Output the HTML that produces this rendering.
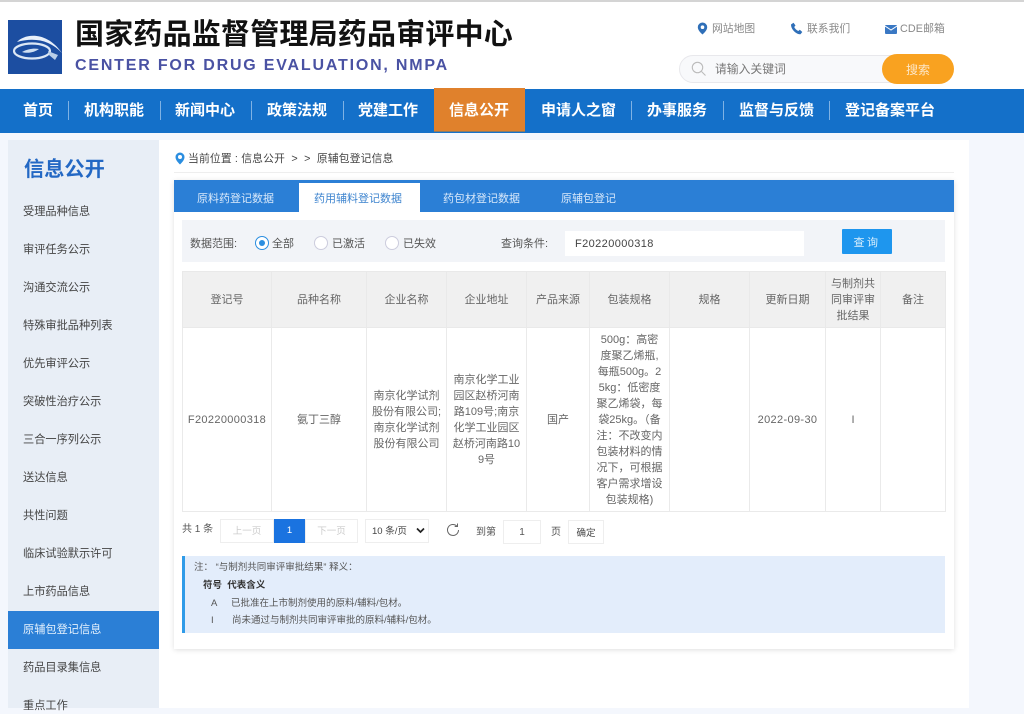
<!DOCTYPE html>
<html lang="zh"><head><meta charset="utf-8"><title>原辅包登记信息</title>
<style>
*{box-sizing:border-box}
html,body{margin:0;padding:0}
body{width:1024px;height:708px;overflow:hidden;position:relative;background:#f4f7fd;font-family:"Liberation Sans","Noto Sans CJK SC",sans-serif;color:#555}
.a,.t{position:absolute}
.t{white-space:nowrap;line-height:16px;font-size:11px}
.n{position:absolute;top:101px;line-height:20px;font-size:15px;font-weight:700;color:#fff;white-space:nowrap}
.s{position:absolute;top:101px;width:1px;height:19px;background:#7fb2e4}
.m{position:absolute;left:23px;font-size:11.2px;line-height:16px;color:#444;white-space:nowrap}
.tb{position:absolute;top:190px;font-size:11px;line-height:18px;color:#d8e8fa;white-space:nowrap}
.r{position:absolute;top:236px;width:14px;height:14px;border-radius:50%;border:1px solid #ccd;background:#fff}
table{position:absolute;left:182px;top:271px;width:763px;border-collapse:collapse;table-layout:fixed;font-size:11px;color:#666}
th,td{border:1px solid #eaeaea;text-align:center;font-weight:400;padding:0;line-height:16px}
th{background:#f0f0f0;height:56px;border-color:#e9e9e9}
td{height:184px;background:#fff}
.b{position:absolute;top:519px;height:24px;border:1px solid #eee;background:#fff;font-size:9.5px;line-height:23px;text-align:center;color:#ccc}
.x{position:absolute;font-size:9.5px;line-height:14px;color:#555;white-space:nowrap}
.num{letter-spacing:.35px}
</style></head><body>
<div class="a" style="left:0;top:0;width:1024px;height:89px;background:#fff;border-top:2px solid #d4d4d4"></div>
<svg class="a" style="left:8px;top:20px" width="54" height="54" viewBox="0 0 54 54"><rect width="54" height="54" fill="#1c4ea1"/><path d="M9 22C16 14 38 10 54 33C42 20 26 17 9 22Z" fill="#e8f0fa"/><ellipse cx="24" cy="31" rx="18" ry="7.5" fill="none" stroke="#dce8f5" stroke-width="2.2"/><path d="M40 31L50 35L47 40L41 35Z" fill="#b9cfe8"/><path d="M14 32C19 29 26 28 31 29C27 32 20 34 14 32Z" fill="#cfe0f2"/></svg>
<div class="t" style="left:75px;top:16px;font-size:29px;line-height:38px;font-weight:700;color:#111;letter-spacing:.2px">国家药品监督管理局药品审评中心</div>
<div class="t" style="left:75px;top:55px;font-size:16px;line-height:21px;font-weight:700;color:#4a52a3;letter-spacing:1.8px">CENTER FOR DRUG EVALUATION, NMPA</div>

<svg class="a" style="left:697px;top:22px" width="11" height="13" viewBox="0 0 11 13"><path d="M5.5 0.5A4.7 4.7 0 0 0 .8 5.2C.8 8 3.5 10.5 5.5 12.5C7.5 10.5 10.2 8 10.2 5.2A4.7 4.7 0 0 0 5.5 .5Z" fill="#2f6fb8"/><circle cx="5.5" cy="5.2" r="1.8" fill="#fff"/></svg>
<div class="t" style="left:712px;top:21px;font-size:10.8px;color:#888">网站地图</div>
<svg class="a" style="left:790px;top:22px" width="13" height="13" viewBox="0 0 13 13"><path d="M1 2.5L3.5 .8L5.5 3.5L4.2 5C5 6.8 6.5 8.2 8.3 9L9.8 7.7L12.3 10L10.5 12.3C6 12.3 1 7.5 1 2.5Z" fill="#2f6fb8"/></svg>
<div class="t" style="left:807px;top:21px;font-size:10.8px;color:#888">联系我们</div>
<svg class="a" style="left:885px;top:25px" width="12" height="9" viewBox="0 0 12 9"><rect width="12" height="9" rx="1" fill="#3a78c4"/><path d="M0 1L6 5L12 1" fill="none" stroke="#fff" stroke-width="1"/></svg>
<div class="t" style="left:900px;top:21px;font-size:10.8px;color:#888;letter-spacing:.1px">CDE邮箱</div>

<div class="a" style="left:679px;top:55px;width:260px;height:28px;border:1px solid #e8e8ec;border-radius:14px;background:#f8f9fb"></div>
<svg class="a" style="left:691px;top:61px" width="16" height="16" viewBox="0 0 16 16"><circle cx="6.5" cy="6.5" r="5.2" fill="none" stroke="#bbb" stroke-width="1.1"/><path d="M10.5 10.5L14.5 14.5" stroke="#bbb" stroke-width="1.1"/></svg>
<div class="t" style="left:715px;top:61px;font-size:11.8px;color:#777">请输入关键词</div>
<div class="a" style="left:882px;top:54px;width:72px;height:30px;border-radius:15px;background:#f9a220;color:#fde7c8;font-size:12px;line-height:32px;text-align:center">搜索</div>

<div class="a" style="left:0;top:89px;width:1024px;height:44px;background:#1470c9"></div>
<div class="a" style="left:434px;top:88px;width:91px;height:44px;background:#e0812c;border-bottom:1px solid #8a7a66"></div>
<div class="n" style="left:23px">首页</div><div class="s" style="left:68px"></div>
<div class="n" style="left:84px">机构职能</div><div class="s" style="left:160px"></div>
<div class="n" style="left:175px">新闻中心</div><div class="s" style="left:251px"></div>
<div class="n" style="left:267px">政策法规</div><div class="s" style="left:343px"></div>
<div class="n" style="left:358px">党建工作</div>
<div class="n" style="left:449px">信息公开</div>
<div class="n" style="left:541px">申请人之窗</div><div class="s" style="left:631px"></div>
<div class="n" style="left:647px">办事服务</div><div class="s" style="left:723px"></div>
<div class="n" style="left:739px">监督与反馈</div><div class="s" style="left:829px"></div>
<div class="n" style="left:845px">登记备案平台</div>

<div class="a" style="left:8px;top:140px;width:151px;height:568px;background:#e8eef6"></div>
<div class="a" style="left:159px;top:140px;width:810px;height:568px;background:#fff"></div>
<div class="t" style="left:24px;top:156px;font-size:20.2px;line-height:28px;font-weight:700;color:#2368c4">信息公开</div>
<div class="m" style="top:204px">受理品种信息</div>
<div class="m" style="top:242px">审评任务公示</div>
<div class="m" style="top:280px">沟通交流公示</div>
<div class="m" style="top:318px">特殊审批品种列表</div>
<div class="m" style="top:356px">优先审评公示</div>
<div class="m" style="top:394px">突破性治疗公示</div>
<div class="m" style="top:432px">三合一序列公示</div>
<div class="m" style="top:470px">送达信息</div>
<div class="m" style="top:508px">共性问题</div>
<div class="m" style="top:546px">临床试验默示许可</div>
<div class="m" style="top:584px">上市药品信息</div>
<div class="a" style="left:8px;top:611px;width:151px;height:38px;background:#2b7fd6"></div>
<div class="m" style="top:622px;color:#e4f0fc">原辅包登记信息</div>
<div class="m" style="top:660px">药品目录集信息</div>
<div class="m" style="top:698px">重点工作</div>

<svg class="a" style="left:175px;top:152px" width="10" height="13" viewBox="0 0 10 13"><path d="M5 .5A4.5 4.5 0 0 0 .5 5C.5 8 3 10.5 5 12.5C7 10.5 9.5 8 9.5 5A4.5 4.5 0 0 0 5 .5Z" fill="#2b8ee0"/><circle cx="5" cy="5" r="2" fill="#fff"/></svg>
<div class="t" style="left:188px;top:151px;font-size:10.8px;color:#444;letter-spacing:.15px">当前位置 : 信息公开 &nbsp;&gt; &nbsp;&gt;&nbsp; 原辅包登记信息</div>
<div class="a" style="left:174px;top:172px;width:780px;height:1px;background:#eee"></div>

<div class="a" style="left:174px;top:180px;width:780px;height:469px;background:#fff;box-shadow:0 1px 5px rgba(0,0,0,.13)"></div>
<div class="a" style="left:174px;top:180px;width:780px;height:32px;background:#2b7fd6"></div>
<div class="a" style="left:299px;top:183px;width:121px;height:30px;background:#fff"></div>
<div class="tb" style="left:197px">原料药登记数据</div>
<div class="tb" style="left:314px;color:#3f85cf">药用辅料登记数据</div>
<div class="tb" style="left:443px">药包材登记数据</div>
<div class="tb" style="left:561px">原辅包登记</div>

<div class="a" style="left:182px;top:220px;width:763px;height:42px;background:#f2f4f8"></div>
<div class="t" style="left:190px;top:236px">数据范围:</div>
<div class="r" style="left:255px;border-color:#2b8ee0"></div><div class="a" style="left:259px;top:240px;width:6px;height:6px;border-radius:50%;background:#2b8ee0"></div>
<div class="t" style="left:272px;top:236px">全部</div>
<div class="r" style="left:314px"></div><div class="t" style="left:332px;top:236px">已激活</div>
<div class="r" style="left:385px"></div><div class="t" style="left:403px;top:236px">已失效</div>
<div class="t" style="left:501px;top:236px">查询条件:</div>
<div class="a" style="left:565px;top:231px;width:239px;height:25px;background:#fff"></div>
<div class="t" style="left:575px;top:236px;color:#444;letter-spacing:.4px">F20220000318</div>
<div class="a" style="left:842px;top:229px;width:50px;height:25px;background:#1e96ee;border-radius:1px;color:#d8eefc;font-size:11px;line-height:28px;text-align:center;letter-spacing:2.5px">查询</div>

<table><colgroup><col style="width:89px"><col style="width:95px"><col style="width:80px"><col style="width:80px"><col style="width:63px"><col style="width:80px"><col style="width:80px"><col style="width:76px"><col style="width:55px"><col style="width:65px"></colgroup>
<tr><th>登记号</th><th>品种名称</th><th>企业名称</th><th>企业地址</th><th>产品来源</th><th>包装规格</th><th>规格</th><th>更新日期</th><th>与制剂共<br>同审评审<br>批结果</th><th>备注</th></tr>
<tr><td class="num">F20220000318</td><td>氨丁三醇</td><td>南京化学试剂<br>股份有限公司;<br>南京化学试剂<br>股份有限公司</td><td>南京化学工业<br>园区赵桥河南<br>路109号;南京<br>化学工业园区<br>赵桥河南路10<br>9号</td><td>国产</td><td>500g：高密<br>度聚乙烯瓶,<br>每瓶500g。2<br>5kg：低密度<br>聚乙烯袋，每<br>袋25kg。（备<br>注：不改变内<br>包装材料的情<br>况下，可根据<br>客户需求增设<br>包装规格)</td><td></td><td class="num">2022-09-30</td><td>I</td><td></td></tr>
</table>

<div class="t" style="left:182px;top:522px;font-size:10px;color:#555">共 1 条</div>
<div class="b" style="left:220px;width:54px">上一页</div>
<div class="a" style="left:274px;top:519px;width:31px;height:24px;background:#1a73e0;color:#fff;font-size:9.5px;line-height:24px;text-align:center">1</div>
<div class="b" style="left:305px;width:53px">下一页</div>
<div class="b" style="left:365px;width:64px;color:#444;text-align:left;padding-left:6px">10 条/页</div>
<svg class="a" style="left:416px;top:527px" width="9" height="7" viewBox="0 0 9 7"><path d="M1 1.5L4.5 5L8 1.5" fill="none" stroke="#222" stroke-width="1.7"/></svg>
<svg class="a" style="left:446px;top:523px" width="14" height="14" viewBox="0 0 14 14"><path d="M10.8 3A5.5 5.5 0 1 0 12.5 7" fill="none" stroke="#666" stroke-width="1"/><path d="M11.5 .5V3.5H8.7" fill="none" stroke="#666" stroke-width="1"/></svg>
<div class="t" style="left:476px;top:525px;font-size:10px;color:#555">到第</div>
<div class="b" style="left:503px;top:520px;width:38px;color:#555;font-size:10px">1</div>
<div class="t" style="left:551px;top:525px;font-size:10px;color:#555">页</div>
<div class="b" style="left:568px;top:520px;width:36px;color:#444;line-height:25px">确定</div>

<div class="a" style="left:182px;top:556px;width:763px;height:77px;background:#e3edfb;border-left:3px solid #2f9be8"></div>
<div class="x" style="left:194px;top:561px">注： “与制剂共同审评审批结果” 释义：</div>
<div class="x" style="left:203px;top:579px;color:#333;font-weight:700">符号 &nbsp;代表含义</div>
<div class="x" style="left:211px;top:597px">A</div><div class="x" style="left:231px;top:597px">已批准在上市制剂使用的原料/辅料/包材。</div>
<div class="x" style="left:211px;top:614px">I</div><div class="x" style="left:232px;top:614px">尚未通过与制剂共同审评审批的原料/辅料/包材。</div>
</body></html>
